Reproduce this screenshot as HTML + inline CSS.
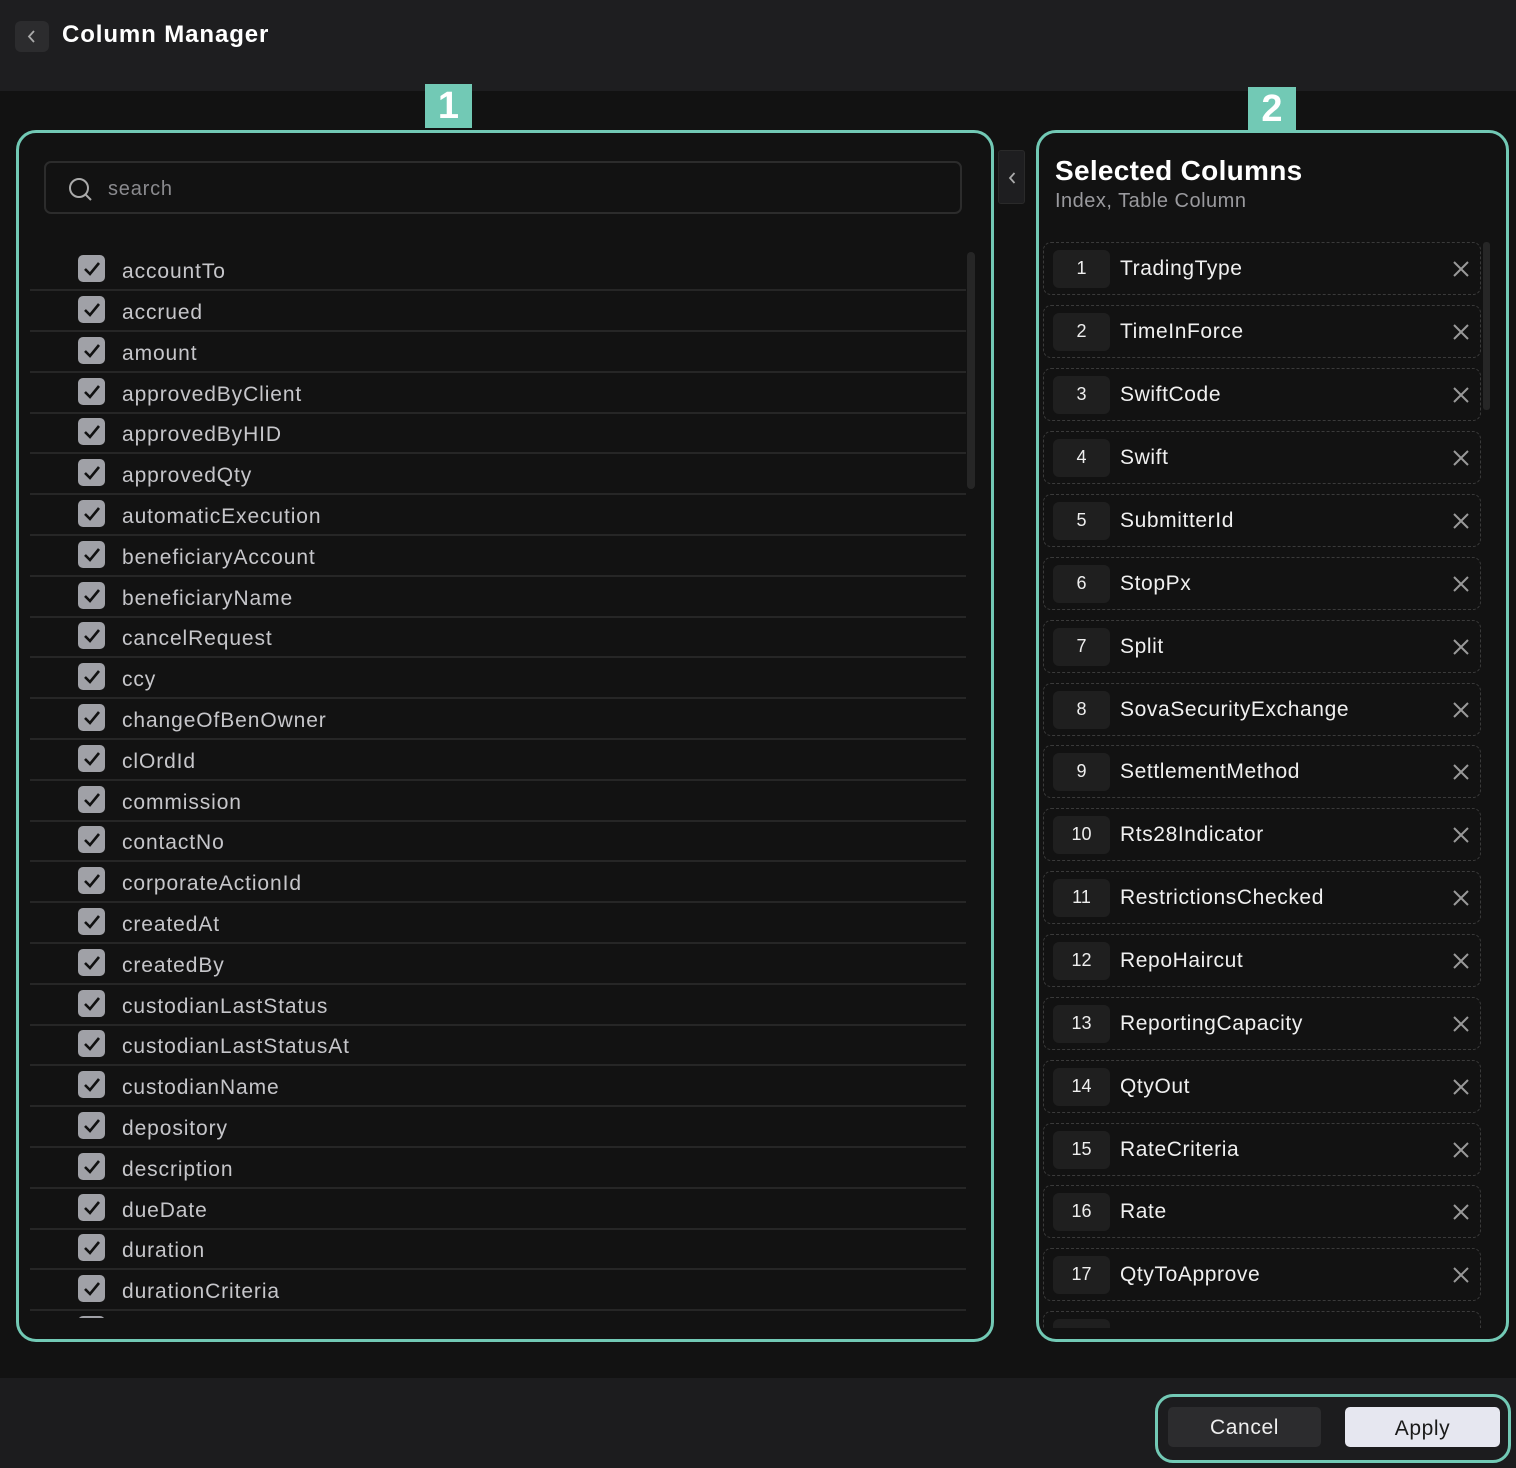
<!DOCTYPE html>
<html><head><meta charset="utf-8"><style>
*{box-sizing:border-box;margin:0;padding:0}
body{width:1516px;height:1468px;background:#121212;font-family:"Liberation Sans",sans-serif;position:relative;overflow:hidden;color:#c9c9cd}
.a{position:absolute}
#hdr{left:0;top:0;width:1516px;height:91px;background:#1e1e20}
#ftr{left:0;top:1378px;width:1516px;height:90px;background:#1c1c1e}
.badge{background:#72c9b5;color:#fff;font-weight:bold;font-size:38px;text-align:center;line-height:44px}
.panel{border:3px solid #72c9b5;border-radius:20px}
.clip{overflow:hidden}
.row{position:absolute;left:0;width:936px;height:41px;border-bottom:2px solid #262626}
.cb{position:absolute;left:48px;top:5px;width:27px;height:27px;background:#a0a1a7;border-radius:5px}
.cb svg{position:absolute;left:4px;top:4px}
.row span{position:absolute;left:92px;top:8px;font-size:21px;color:#c6c6ca;line-height:28px;letter-spacing:0.9px}
.it{position:absolute;left:0;width:438px;height:53px;border:1.5px dashed #3a3a3a;border-radius:8px}
.ix{position:absolute;left:9px;top:7px;width:57px;height:38px;background:#1f1f1f;border-radius:6px;color:#eee;font-size:18px;text-align:center;line-height:36px}
.it span{position:absolute;left:76px;top:12px;font-size:21px;color:#f0f0f0;line-height:28px;letter-spacing:0.6px}
.it svg{position:absolute;left:408px;top:17px}
</style></head><body>
<div id="hdr" class="a"></div>
<div class="a" style="left:15px;top:21px;width:34px;height:31px;background:#2c2c2e;border-radius:6px"><svg width="34" height="31"><path d="M19 10 L14 15.5 L19 21" stroke="#aaa" stroke-width="1.8" fill="none"/></svg></div>
<div class="a" style="left:62px;top:21px;font-size:24px;font-weight:bold;color:#fff;letter-spacing:0.9px">Column Manager</div>

<div class="a badge" style="left:425px;top:84px;width:47px;height:44px">1</div>
<div class="a badge" style="left:1248px;top:87px;width:48px;height:44px">2</div>

<div class="a panel" style="left:16px;top:130px;width:978px;height:1212px"></div>
<div class="a" style="left:44px;top:161px;width:918px;height:53px;border:2px solid #2c2c2c;border-radius:7px"></div>
<svg class="a" style="left:67px;top:176px" width="28" height="28"><circle cx="12" cy="12" r="9" stroke="#aaa" stroke-width="2" fill="none"/><path d="M18.5 18.5 L24 24" stroke="#aaa" stroke-width="2"/></svg>
<div class="a" style="left:108px;top:178px;font-size:20px;color:#8a8a8e;letter-spacing:0.8px">search</div>
<div class="a" style="left:967px;top:252px;width:8px;height:237px;background:#262626;border-radius:4px"></div>

<div class="a clip" style="left:30px;top:250px;width:936px;height:1068px">
<div class="row" style="top:0px"><div class="cb"><svg width="19" height="19"><path d="M3 10 L8 15 L17 4" stroke="#111" stroke-width="2.6" fill="none"/></svg></div><span>accountTo</span></div>
<div class="row" style="top:41px"><div class="cb"><svg width="19" height="19"><path d="M3 10 L8 15 L17 4" stroke="#111" stroke-width="2.6" fill="none"/></svg></div><span>accrued</span></div>
<div class="row" style="top:82px"><div class="cb"><svg width="19" height="19"><path d="M3 10 L8 15 L17 4" stroke="#111" stroke-width="2.6" fill="none"/></svg></div><span>amount</span></div>
<div class="row" style="top:123px"><div class="cb"><svg width="19" height="19"><path d="M3 10 L8 15 L17 4" stroke="#111" stroke-width="2.6" fill="none"/></svg></div><span>approvedByClient</span></div>
<div class="row" style="top:163px"><div class="cb"><svg width="19" height="19"><path d="M3 10 L8 15 L17 4" stroke="#111" stroke-width="2.6" fill="none"/></svg></div><span>approvedByHID</span></div>
<div class="row" style="top:204px"><div class="cb"><svg width="19" height="19"><path d="M3 10 L8 15 L17 4" stroke="#111" stroke-width="2.6" fill="none"/></svg></div><span>approvedQty</span></div>
<div class="row" style="top:245px"><div class="cb"><svg width="19" height="19"><path d="M3 10 L8 15 L17 4" stroke="#111" stroke-width="2.6" fill="none"/></svg></div><span>automaticExecution</span></div>
<div class="row" style="top:286px"><div class="cb"><svg width="19" height="19"><path d="M3 10 L8 15 L17 4" stroke="#111" stroke-width="2.6" fill="none"/></svg></div><span>beneficiaryAccount</span></div>
<div class="row" style="top:327px"><div class="cb"><svg width="19" height="19"><path d="M3 10 L8 15 L17 4" stroke="#111" stroke-width="2.6" fill="none"/></svg></div><span>beneficiaryName</span></div>
<div class="row" style="top:367px"><div class="cb"><svg width="19" height="19"><path d="M3 10 L8 15 L17 4" stroke="#111" stroke-width="2.6" fill="none"/></svg></div><span>cancelRequest</span></div>
<div class="row" style="top:408px"><div class="cb"><svg width="19" height="19"><path d="M3 10 L8 15 L17 4" stroke="#111" stroke-width="2.6" fill="none"/></svg></div><span>ccy</span></div>
<div class="row" style="top:449px"><div class="cb"><svg width="19" height="19"><path d="M3 10 L8 15 L17 4" stroke="#111" stroke-width="2.6" fill="none"/></svg></div><span>changeOfBenOwner</span></div>
<div class="row" style="top:490px"><div class="cb"><svg width="19" height="19"><path d="M3 10 L8 15 L17 4" stroke="#111" stroke-width="2.6" fill="none"/></svg></div><span>clOrdId</span></div>
<div class="row" style="top:531px"><div class="cb"><svg width="19" height="19"><path d="M3 10 L8 15 L17 4" stroke="#111" stroke-width="2.6" fill="none"/></svg></div><span>commission</span></div>
<div class="row" style="top:571px"><div class="cb"><svg width="19" height="19"><path d="M3 10 L8 15 L17 4" stroke="#111" stroke-width="2.6" fill="none"/></svg></div><span>contactNo</span></div>
<div class="row" style="top:612px"><div class="cb"><svg width="19" height="19"><path d="M3 10 L8 15 L17 4" stroke="#111" stroke-width="2.6" fill="none"/></svg></div><span>corporateActionId</span></div>
<div class="row" style="top:653px"><div class="cb"><svg width="19" height="19"><path d="M3 10 L8 15 L17 4" stroke="#111" stroke-width="2.6" fill="none"/></svg></div><span>createdAt</span></div>
<div class="row" style="top:694px"><div class="cb"><svg width="19" height="19"><path d="M3 10 L8 15 L17 4" stroke="#111" stroke-width="2.6" fill="none"/></svg></div><span>createdBy</span></div>
<div class="row" style="top:735px"><div class="cb"><svg width="19" height="19"><path d="M3 10 L8 15 L17 4" stroke="#111" stroke-width="2.6" fill="none"/></svg></div><span>custodianLastStatus</span></div>
<div class="row" style="top:775px"><div class="cb"><svg width="19" height="19"><path d="M3 10 L8 15 L17 4" stroke="#111" stroke-width="2.6" fill="none"/></svg></div><span>custodianLastStatusAt</span></div>
<div class="row" style="top:816px"><div class="cb"><svg width="19" height="19"><path d="M3 10 L8 15 L17 4" stroke="#111" stroke-width="2.6" fill="none"/></svg></div><span>custodianName</span></div>
<div class="row" style="top:857px"><div class="cb"><svg width="19" height="19"><path d="M3 10 L8 15 L17 4" stroke="#111" stroke-width="2.6" fill="none"/></svg></div><span>depository</span></div>
<div class="row" style="top:898px"><div class="cb"><svg width="19" height="19"><path d="M3 10 L8 15 L17 4" stroke="#111" stroke-width="2.6" fill="none"/></svg></div><span>description</span></div>
<div class="row" style="top:939px"><div class="cb"><svg width="19" height="19"><path d="M3 10 L8 15 L17 4" stroke="#111" stroke-width="2.6" fill="none"/></svg></div><span>dueDate</span></div>
<div class="row" style="top:979px"><div class="cb"><svg width="19" height="19"><path d="M3 10 L8 15 L17 4" stroke="#111" stroke-width="2.6" fill="none"/></svg></div><span>duration</span></div>
<div class="row" style="top:1020px"><div class="cb"><svg width="19" height="19"><path d="M3 10 L8 15 L17 4" stroke="#111" stroke-width="2.6" fill="none"/></svg></div><span>durationCriteria</span></div>
<div class="row" style="top:1061px"><div class="cb"></div></div>
</div>

<div class="a" style="left:998px;top:150px;width:27px;height:54px;background:#1e1e20;border:1px solid #2a2a2a;border-radius:3px"><svg width="27" height="54"><path d="M15.5 22 L11 27 L15.5 32" stroke="#aaa" stroke-width="1.8" fill="none"/></svg></div>

<div class="a panel" style="left:1036px;top:130px;width:473px;height:1212px"></div>
<div class="a" style="left:1055px;top:155px;font-size:28px;font-weight:bold;color:#fff;letter-spacing:0.3px">Selected Columns</div>
<div class="a" style="left:1055px;top:190px;font-size:20px;color:#9a9a9e;letter-spacing:0.5px">Index, Table Column</div>
<div class="a" style="left:1483px;top:242px;width:7px;height:168px;background:#262626;border-radius:3px"></div>

<div class="a clip" style="left:1043px;top:241px;width:440px;height:1087px">
<div class="it" style="top:1px"><div class="ix">1</div><span>TradingType</span><svg width="18" height="18"><path d="M2 2L16 16M16 2L2 16" stroke="#999" stroke-width="2"/></svg></div>
<div class="it" style="top:64px"><div class="ix">2</div><span>TimeInForce</span><svg width="18" height="18"><path d="M2 2L16 16M16 2L2 16" stroke="#999" stroke-width="2"/></svg></div>
<div class="it" style="top:127px"><div class="ix">3</div><span>SwiftCode</span><svg width="18" height="18"><path d="M2 2L16 16M16 2L2 16" stroke="#999" stroke-width="2"/></svg></div>
<div class="it" style="top:190px"><div class="ix">4</div><span>Swift</span><svg width="18" height="18"><path d="M2 2L16 16M16 2L2 16" stroke="#999" stroke-width="2"/></svg></div>
<div class="it" style="top:253px"><div class="ix">5</div><span>SubmitterId</span><svg width="18" height="18"><path d="M2 2L16 16M16 2L2 16" stroke="#999" stroke-width="2"/></svg></div>
<div class="it" style="top:316px"><div class="ix">6</div><span>StopPx</span><svg width="18" height="18"><path d="M2 2L16 16M16 2L2 16" stroke="#999" stroke-width="2"/></svg></div>
<div class="it" style="top:379px"><div class="ix">7</div><span>Split</span><svg width="18" height="18"><path d="M2 2L16 16M16 2L2 16" stroke="#999" stroke-width="2"/></svg></div>
<div class="it" style="top:442px"><div class="ix">8</div><span>SovaSecurityExchange</span><svg width="18" height="18"><path d="M2 2L16 16M16 2L2 16" stroke="#999" stroke-width="2"/></svg></div>
<div class="it" style="top:504px"><div class="ix">9</div><span>SettlementMethod</span><svg width="18" height="18"><path d="M2 2L16 16M16 2L2 16" stroke="#999" stroke-width="2"/></svg></div>
<div class="it" style="top:567px"><div class="ix">10</div><span>Rts28Indicator</span><svg width="18" height="18"><path d="M2 2L16 16M16 2L2 16" stroke="#999" stroke-width="2"/></svg></div>
<div class="it" style="top:630px"><div class="ix">11</div><span>RestrictionsChecked</span><svg width="18" height="18"><path d="M2 2L16 16M16 2L2 16" stroke="#999" stroke-width="2"/></svg></div>
<div class="it" style="top:693px"><div class="ix">12</div><span>RepoHaircut</span><svg width="18" height="18"><path d="M2 2L16 16M16 2L2 16" stroke="#999" stroke-width="2"/></svg></div>
<div class="it" style="top:756px"><div class="ix">13</div><span>ReportingCapacity</span><svg width="18" height="18"><path d="M2 2L16 16M16 2L2 16" stroke="#999" stroke-width="2"/></svg></div>
<div class="it" style="top:819px"><div class="ix">14</div><span>QtyOut</span><svg width="18" height="18"><path d="M2 2L16 16M16 2L2 16" stroke="#999" stroke-width="2"/></svg></div>
<div class="it" style="top:882px"><div class="ix">15</div><span>RateCriteria</span><svg width="18" height="18"><path d="M2 2L16 16M16 2L2 16" stroke="#999" stroke-width="2"/></svg></div>
<div class="it" style="top:944px"><div class="ix">16</div><span>Rate</span><svg width="18" height="18"><path d="M2 2L16 16M16 2L2 16" stroke="#999" stroke-width="2"/></svg></div>
<div class="it" style="top:1007px"><div class="ix">17</div><span>QtyToApprove</span><svg width="18" height="18"><path d="M2 2L16 16M16 2L2 16" stroke="#999" stroke-width="2"/></svg></div>
<div class="it" style="top:1070px"><div class="ix"></div></div>
</div>

<div id="ftr" class="a"></div>
<div class="a" style="left:1155px;top:1394px;width:356px;height:69px;border:3px solid #72c9b5;border-radius:18px"></div>
<div class="a" style="left:1168px;top:1407px;width:153px;height:40px;background:#2c2c2e;border-radius:5px;color:#eee;font-size:21px;text-align:center;line-height:42px;letter-spacing:0.6px">Cancel</div>
<div class="a" style="left:1345px;top:1407px;width:155px;height:40px;background:#e6e7f0;border-radius:5px;color:#1a1a1a;font-size:21px;text-align:center;line-height:44px;letter-spacing:0.6px">Apply</div>
</body></html>
